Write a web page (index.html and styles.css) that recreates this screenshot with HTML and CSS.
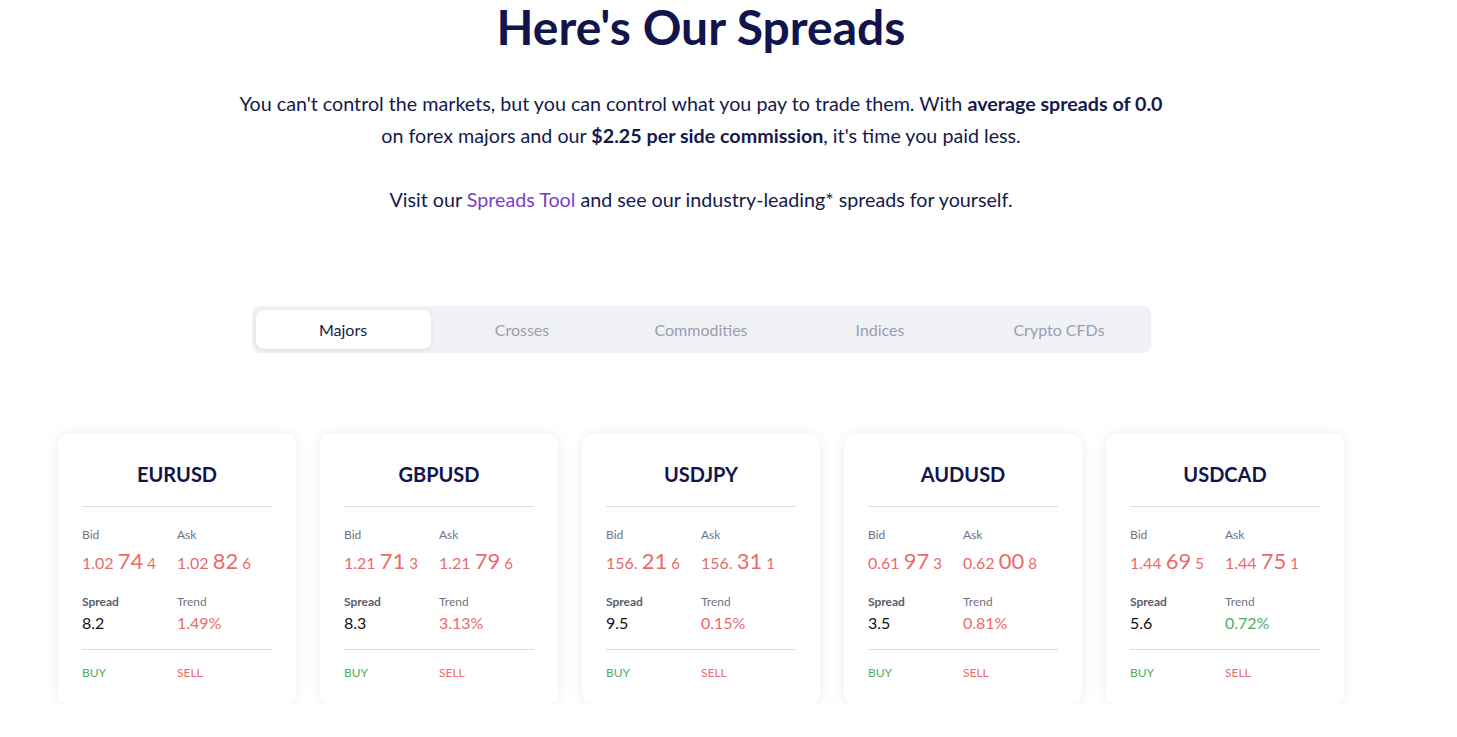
FILE: index.html
```html
<!DOCTYPE html>
<html lang="en">
<head>
<meta charset="utf-8">
<title>Here's Our Spreads</title>
<link rel="stylesheet" href="styles.css">
</head>
<body>
<main class="page">
  <section class="intro">
    <h1 class="title">Here's Our Spreads</h1>
    <p class="lead">You can't control the markets, but you can control what you pay to trade them. With <strong>average spreads of 0.0</strong><br>on forex majors and our <strong>$2.25 per side commission</strong>, it's time you paid less.</p>
    <p class="lead lead-2">Visit our <a class="link" href="#">Spreads Tool</a> and see our industry-leading* spreads for yourself.</p>
  </section>

  <nav class="tabs">
    <button class="tab active">Majors</button>
    <button class="tab">Crosses</button>
    <button class="tab">Commodities</button>
    <button class="tab">Indices</button>
    <button class="tab">Crypto CFDs</button>
  </nav>

  <section class="cards">
    <article class="card">
      <h3 class="pair">EURUSD</h3>
      <div class="rule"></div>
      <div class="grid">
        <div class="cell"><div class="label">Bid</div><div class="price"><span class="p-a">1.02</span><span class="p-b">74</span><span class="p-c">4</span></div></div>
        <div class="cell"><div class="label">Ask</div><div class="price"><span class="p-a">1.02</span><span class="p-b">82</span><span class="p-c">6</span></div></div>
        <div class="cell row2"><div class="label strong">Spread</div><div class="val">8.2</div></div>
        <div class="cell row2"><div class="label">Trend</div><div class="val down">1.49%</div></div>
      </div>
      <div class="rule rule-2"></div>
      <div class="actions"><a class="buy" href="#">BUY</a><a class="sell" href="#">SELL</a></div>
    </article>

    <article class="card">
      <h3 class="pair">GBPUSD</h3>
      <div class="rule"></div>
      <div class="grid">
        <div class="cell"><div class="label">Bid</div><div class="price"><span class="p-a">1.21</span><span class="p-b">71</span><span class="p-c">3</span></div></div>
        <div class="cell"><div class="label">Ask</div><div class="price"><span class="p-a">1.21</span><span class="p-b">79</span><span class="p-c">6</span></div></div>
        <div class="cell row2"><div class="label strong">Spread</div><div class="val">8.3</div></div>
        <div class="cell row2"><div class="label">Trend</div><div class="val down">3.13%</div></div>
      </div>
      <div class="rule rule-2"></div>
      <div class="actions"><a class="buy" href="#">BUY</a><a class="sell" href="#">SELL</a></div>
    </article>

    <article class="card">
      <h3 class="pair">USDJPY</h3>
      <div class="rule"></div>
      <div class="grid">
        <div class="cell"><div class="label">Bid</div><div class="price"><span class="p-a">156.</span><span class="p-b">21</span><span class="p-c">6</span></div></div>
        <div class="cell"><div class="label">Ask</div><div class="price"><span class="p-a">156.</span><span class="p-b">31</span><span class="p-c">1</span></div></div>
        <div class="cell row2"><div class="label strong">Spread</div><div class="val">9.5</div></div>
        <div class="cell row2"><div class="label">Trend</div><div class="val down">0.15%</div></div>
      </div>
      <div class="rule rule-2"></div>
      <div class="actions"><a class="buy" href="#">BUY</a><a class="sell" href="#">SELL</a></div>
    </article>

    <article class="card">
      <h3 class="pair">AUDUSD</h3>
      <div class="rule"></div>
      <div class="grid">
        <div class="cell"><div class="label">Bid</div><div class="price"><span class="p-a">0.61</span><span class="p-b">97</span><span class="p-c">3</span></div></div>
        <div class="cell"><div class="label">Ask</div><div class="price"><span class="p-a">0.62</span><span class="p-b">00</span><span class="p-c">8</span></div></div>
        <div class="cell row2"><div class="label strong">Spread</div><div class="val">3.5</div></div>
        <div class="cell row2"><div class="label">Trend</div><div class="val down">0.81%</div></div>
      </div>
      <div class="rule rule-2"></div>
      <div class="actions"><a class="buy" href="#">BUY</a><a class="sell" href="#">SELL</a></div>
    </article>

    <article class="card">
      <h3 class="pair">USDCAD</h3>
      <div class="rule"></div>
      <div class="grid">
        <div class="cell"><div class="label">Bid</div><div class="price"><span class="p-a">1.44</span><span class="p-b">69</span><span class="p-c">5</span></div></div>
        <div class="cell"><div class="label">Ask</div><div class="price"><span class="p-a">1.44</span><span class="p-b">75</span><span class="p-c">1</span></div></div>
        <div class="cell row2"><div class="label strong">Spread</div><div class="val">5.6</div></div>
        <div class="cell row2"><div class="label">Trend</div><div class="val up">0.72%</div></div>
      </div>
      <div class="rule rule-2"></div>
      <div class="actions"><a class="buy" href="#">BUY</a><a class="sell" href="#">SELL</a></div>
    </article>
  </section>
</main>
</body>
</html>
```

FILE: styles.css
```css
* { box-sizing: border-box; }

html, body {
  margin: 0;
  padding: 0;
  background: #ffffff;
  font-family: Lato, "Open Sans", "Liberation Sans", sans-serif;
  color: #141a4a;
}

.page {
  width: 1402px;
  display: flex;
  flex-direction: column;
  align-items: center;
}

.intro {
  display: flex;
  flex-direction: column;
  align-items: center;
  text-align: center;
}

.title {
  margin: 0;
  font-size: 48px;
  line-height: 54px;
  font-weight: 700;
  color: #11154c;
}

.lead {
  margin: 34px 0 0;
  font-size: 19.7px;
  line-height: 32px;
  color: #141a4a;
}

.lead strong { font-weight: 700; }

.lead-2 { margin-top: 32px; }

.link {
  color: #7a3fc6;
  text-decoration: none;
}

.tabs {
  margin-top: 90px;
  width: 899px;
  height: 47px;
  padding: 4px;
  display: flex;
  gap: 4px;
  background: #f0f1f5;
  border-radius: 8px;
}

.tab {
  flex: 1;
  border: 0;
  background: transparent;
  font-family: inherit;
  font-size: 16px;
  color: #9a9db0;
  border-radius: 8px;
  padding: 0;
  cursor: pointer;
}

.tab.active {
  background: #ffffff;
  color: #141a4a;
  box-shadow: 0 1px 4px rgba(20, 26, 74, 0.10);
}

.cards {
  margin-top: 81px;
  display: flex;
  gap: 24px;
}

.card {
  width: 238px;
  padding: 26px 24px 23px;
  background: #ffffff;
  border-radius: 10px;
  box-shadow: 0 0 14px rgba(20, 26, 74, 0.08);
}

.pair {
  margin: 0;
  text-align: center;
  font-size: 20px;
  line-height: 28px;
  font-weight: 700;
  color: #11154c;
}

.rule {
  height: 1px;
  background: #dcdde6;
  margin-top: 18px;
}

.rule-2 { margin-top: 16px; }

.grid {
  margin-top: 20px;
  display: grid;
  grid-template-columns: 95px 95px;
}

.row2 { margin-top: 17px; }

.label {
  font-size: 12px;
  line-height: 16px;
  color: #6f7282;
}

.label.strong {
  font-weight: 700;
  color: #5a5d6b;
}

.price {
  margin-top: 4px;
  font-size: 16px;
  line-height: 28px;
  color: #ea6b6b;
  white-space: nowrap;
}

.p-b {
  font-size: 22px;
  margin-left: 4px;
}

.p-c {
  font-size: 15px;
  margin-left: 4px;
}

.val {
  margin-top: 3px;
  font-size: 16px;
  line-height: 20px;
  color: #111111;
}

.val.down { color: #ea6b6b; }
.val.up { color: #4cae62; }

.actions {
  margin-top: 15px;
  display: grid;
  grid-template-columns: 95px 95px;
  font-size: 12px;
  line-height: 16px;
}

.actions a { text-decoration: none; }
.buy { color: #4cae62; }
.sell { color: #ea6b6b; }
```
